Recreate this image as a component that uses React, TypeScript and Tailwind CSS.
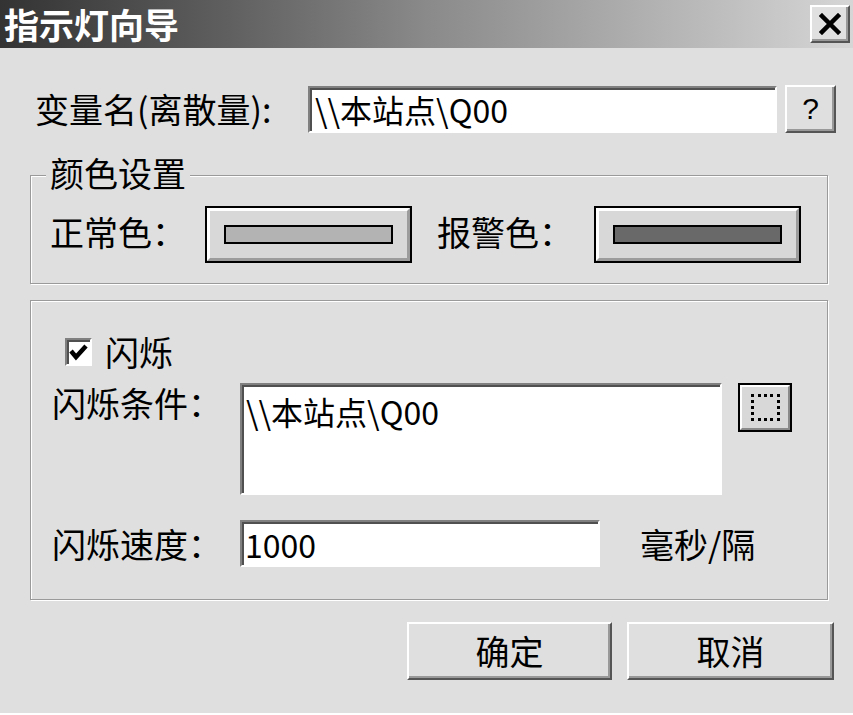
import React from "react";

const raised =
  "border-2 border-t-white border-l-white border-r-[#555] border-b-[#555] shadow-[inset_-2px_-2px_0_#999]";
const sunken =
  "border-2 border-t-[#808080] border-l-[#808080] border-r-white border-b-white shadow-[inset_2px_2px_0_#505050]";
const group =
  "border border-[#9a9a9a] shadow-[inset_1px_1px_0_#fff,1px_1px_0_#fff]";

function ColorButton({ swatch }: { swatch: string }) {
  return (
    <div className="w-[207px] h-[57px] border-2 border-black">
      <div className="w-full h-full border-[3px] border-t-white border-l-white border-r-[#9c9c9c] border-b-[#9c9c9c] bg-[#d8d8d8] flex items-center justify-center">
        <div className={`w-[169px] h-[19px] border-2 border-black ${swatch}`} />
      </div>
    </div>
  );
}

export default function App() {
  return (
    <div className="w-[853px] h-[715px] bg-white text-black font-['Noto_Sans_CJK_SC','Liberation_Sans',sans-serif]">
      <div className="h-[713px] bg-[#dfdfdf] flex flex-col">
        {/* Title bar */}
        <div className="h-[48px] shrink-0 bg-linear-to-r from-[#333333] via-[#8a8a8a] to-[#d6d6d6] flex items-center justify-between pl-[4px] pr-[3px]">
          <span className="text-white font-bold text-[35px] leading-[42px]">
            指示灯向导
          </span>
          <div className={`w-[40px] h-[38px] bg-[#e0e0e0] ${raised} flex items-center justify-center`}>
            <svg width="22" height="22" viewBox="0 0 22 22">
              <path d="M3 3 L19 19 M19 3 L3 19" stroke="black" strokeWidth="4.5" strokeLinecap="square" />
            </svg>
          </div>
        </div>

        <div className="pl-[30px] flex flex-col">
          {/* Row 1 */}
          <div className="mt-[37px] flex items-center h-[48px]">
            <div className="w-[278px] pl-[5px] text-[34px] leading-[40px]">变量名(离散量):</div>
            <div className={`w-[469px] h-[47px] bg-white ${sunken} flex items-center pl-[5px] text-[32px] leading-[40px]`}>
              \\本站点\Q00
            </div>
            <div
              className={`ml-[8px] w-[51px] h-[48px] bg-[#dfdfdf] ${raised} flex items-center justify-center font-['Liberation_Sans',sans-serif] text-[30px] leading-none`}
            >
              ?
            </div>
          </div>

          {/* Color group */}
          <div className={`mt-[42px] w-[798px] h-[109px] relative ${group}`}>
            <div className="absolute left-[15px] top-[-20px] px-[4px] bg-[#dfdfdf] text-[34px] leading-none">
              颜色设置
            </div>
            <div className="flex items-center mt-[30px]">
              <div className="ml-[19px] w-[155px] text-[34px] leading-none -mt-[6px]">正常色：</div>
              <ColorButton swatch="bg-[#b3b3b3]" />
              <div className="ml-[25px] w-[157px] text-[34px] leading-none -mt-[6px]">报警色：</div>
              <ColorButton swatch="bg-[#696969]" />
            </div>
          </div>

          {/* Flash group */}
          <div className={`mt-[16px] w-[798px] h-[300px] ${group} flex flex-col`}>
            <div className="mt-[37px] ml-[34px] flex items-center h-[28px]">
              <div className={`w-[27px] h-[28px] bg-white ${sunken} flex items-center justify-center`}>
                <svg width="20" height="18" viewBox="0 0 20 18">
                  <path d="M2 8 L7 14 L17 3" stroke="black" strokeWidth="4.5" fill="none" />
                </svg>
              </div>
              <div className="ml-[13px] text-[34px] leading-none">闪烁</div>
            </div>

            <div className="mt-[17px] flex items-start">
              <div className="ml-[21px] w-[188px] text-[34px] leading-none pt-[3px]">闪烁条件：</div>
              <div className={`w-[482px] h-[112px] bg-white ${sunken} pl-[4px] pt-[10px] text-[32px] leading-none`}>
                \\本站点\Q00
              </div>
              <div className="ml-[16px] w-[54px] h-[49px] border-2 border-black">
                <div className="w-full h-full border-2 border-t-white border-l-white border-r-[#8a8a8a] border-b-[#8a8a8a] bg-[#d8d8d8] flex items-center justify-center">
                  <div className="w-[29px] h-[27px] border-[3px] border-dotted border-black" />
                </div>
              </div>
            </div>

            <div className="mt-[25px] flex items-center">
              <div className="ml-[21px] w-[188px] text-[34px] leading-none">闪烁速度：</div>
              <div className={`w-[360px] h-[47px] bg-white ${sunken} flex items-center pl-[3px] text-[32px] leading-none`}>
                1000
              </div>
              <div className="ml-[40px] text-[34px] leading-none">毫秒/隔</div>
            </div>
          </div>
        </div>

        {/* Buttons */}
        <div className="mt-[22px] flex justify-end gap-[15px] pr-[19px]">
          <div className={`w-[205px] h-[58px] bg-[#dfdfdf] ${raised} flex items-center justify-center text-[34px] leading-none`}>
            确定
          </div>
          <div className={`w-[207px] h-[58px] bg-[#dfdfdf] ${raised} flex items-center justify-center text-[34px] leading-none`}>
            取消
          </div>
        </div>
      </div>
    </div>
  );
}
